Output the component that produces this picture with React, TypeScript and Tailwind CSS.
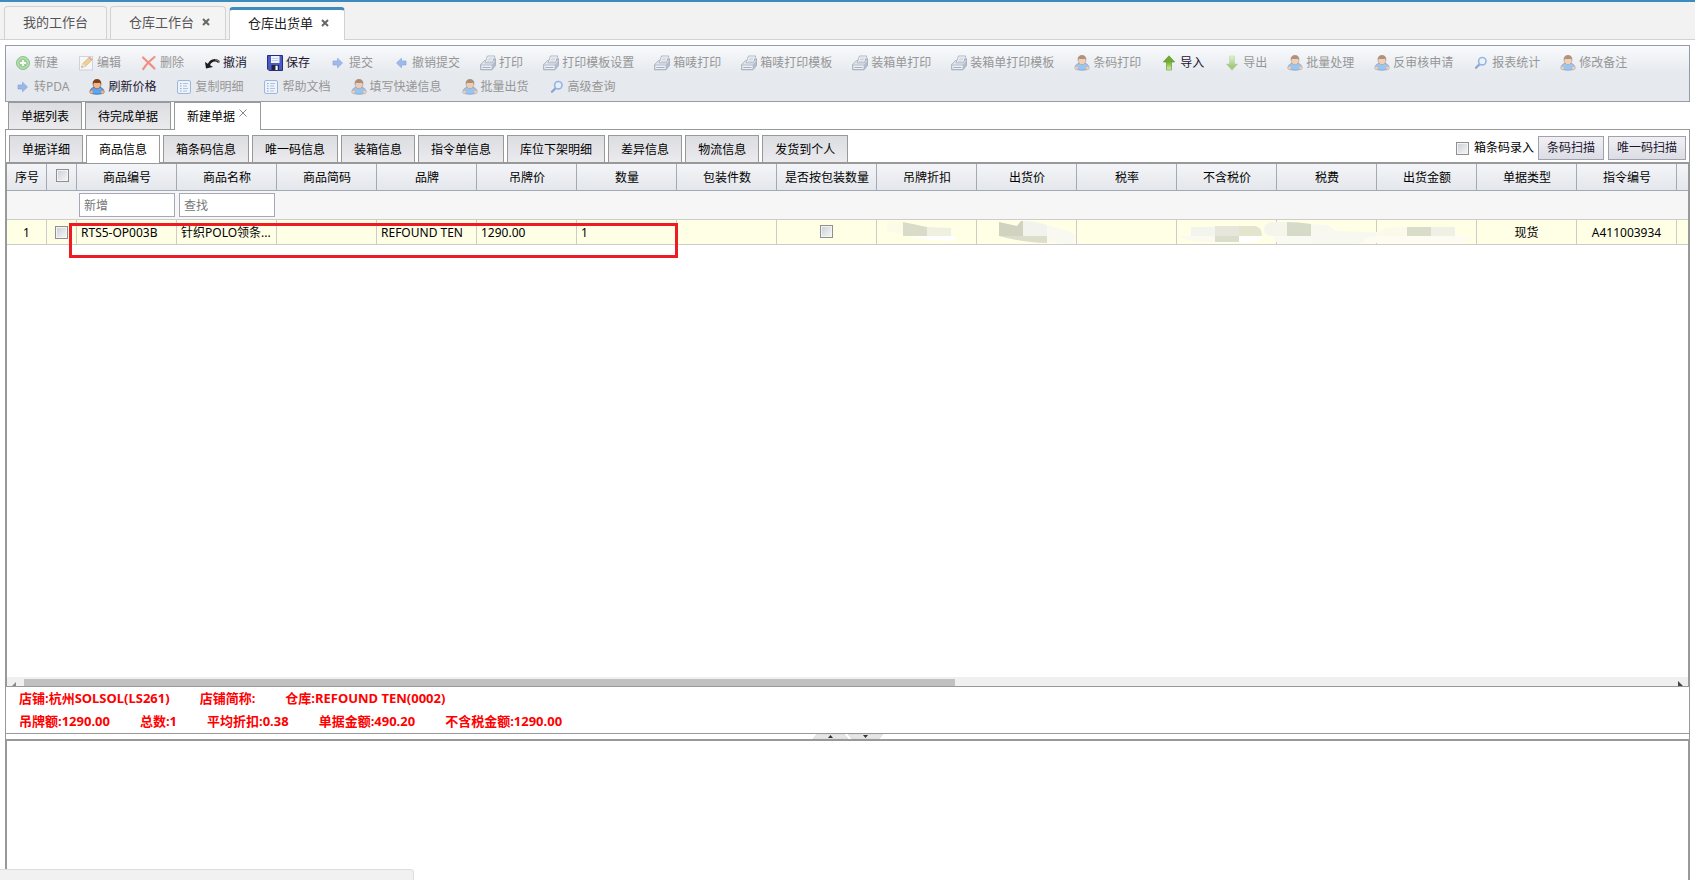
import { useState } from "react";

type IconName =
    | "add" | "edit" | "delete" | "undo" | "save" | "right" | "left"
    | "print" | "user" | "up" | "down" | "search" | "list";

interface Action {
    label: string;
    icon: IconName;
    enabled?: boolean;
}

const actions: Action[] = [
    { label: "新建", icon: "add" },
    { label: "编辑", icon: "edit" },
    { label: "删除", icon: "delete" },
    { label: "撤消", icon: "undo", enabled: true },
    { label: "保存", icon: "save", enabled: true },
    { label: "提交", icon: "right" },
    { label: "撤销提交", icon: "left" },
    { label: "打印", icon: "print" },
    { label: "打印模板设置", icon: "print" },
    { label: "箱唛打印", icon: "print" },
    { label: "箱唛打印模板", icon: "print" },
    { label: "装箱单打印", icon: "print" },
    { label: "装箱单打印模板", icon: "print" },
    { label: "条码打印", icon: "user" },
    { label: "导入", icon: "up", enabled: true },
    { label: "导出", icon: "down" },
    { label: "批量处理", icon: "user" },
    { label: "反审核申请", icon: "user" },
    { label: "报表统计", icon: "search" },
    { label: "修改备注", icon: "user" },
    { label: "转PDA", icon: "right" },
    { label: "刷新价格", icon: "user", enabled: true },
    { label: "复制明细", icon: "list" },
    { label: "帮助文档", icon: "list" },
    { label: "填写快递信息", icon: "user" },
    { label: "批量出货", icon: "user" },
    { label: "高级查询", icon: "search" },
];

const workTabs = ["我的工作台", "仓库工作台", "仓库出货单"];
const docTabs = ["单据列表", "待完成单据", "新建单据"];
const detailTabs = [
    "单据详细", "商品信息", "箱条码信息", "唯一码信息", "装箱信息",
    "指令单信息", "库位下架明细", "差异信息", "物流信息", "发货到个人",
];

const columns = [
    "商品编号", "商品名称", "商品简码", "品牌", "吊牌价", "数量", "包装件数", "是否按包装数量",
    "吊牌折扣", "出货价", "税率", "不含税价", "税费", "出货金额", "单据类型", "指令编号", "",
];

const row: { [key: string]: string } = {
    "商品编号": "RTS5-OP003B",
    "商品名称": "针织POLO领条...",
    "品牌": "REFOUND TEN",
    "吊牌价": "1290.00",
    "数量": "1",
    "单据类型": "现货",
    "指令编号": "A411003934",
};

const summary = [
    ["店铺:杭州SOLSOL(LS261)", "店铺简称:", "仓库:REFOUND TEN(0002)"],
    ["吊牌额:1290.00", "总数:1", "平均折扣:0.38", "单据金额:490.20", "不含税金额:1290.00"],
];

const checkboxClass =
    "block h-[13px] w-[13px] appearance-none border border-[#8e8f8f] bg-linear-to-br from-[#c9ced6] to-[#f8f8f8] shadow-[inset_0_0_0_1px_#f4f4f4] checked:bg-[#3c8dbc]";

function Icon({ name }: { name: IconName }) {
    switch (name) {
        case "add":
            return (
                <>
                    <circle cx="8" cy="8" r="6.5" fill="#58b848" stroke="#3f9a3a" />
                    <circle cx="8" cy="8" r="5.3" fill="none" stroke="#b5e3a8" strokeWidth="0.8" />
                    <path d="M8 5v6M5 8h6" stroke="#fff" strokeWidth="2" />
                </>
            );
        case "edit":
            return (
                <>
                    <rect x="1.5" y="1.5" width="13" height="13.5" fill="#fdfdfd" stroke="#b4bcc8" />
                    <path d="M3.5 12.5l1.2-4L11.5 1.8l3 2.7-6.8 6.8z" fill="#f0b34c" stroke="#c98b2f" strokeWidth="0.7" />
                    <path d="M11.5 1.8l3 2.7-1.3 1.3-3-2.7z" fill="#dc7060" />
                    <path d="M3.5 12.5l1.2-4 3 2.8z" fill="#f3dcb4" />
                    <path d="M3.5 12.5l.5-1.6 1.1 1z" fill="#444" />
                </>
            );
        case "delete":
            return (
                <path d="M2 2.5c3 3 7 6.500 11.500 11M13.500 2C9 5.500 5 9.500 2.200 14" fill="none" stroke="#f0452c" strokeWidth="2.2" strokeLinecap="round" />
            );
        case "undo":
            return (
                <>
                    <path d="M4.500 10.500C6 5.500 11 3.500 15 7" fill="none" stroke="#1c1c1c" strokeWidth="2.4" />
                    <path d="M11 4.800c2 0 3.500.8 4.500 2.800" fill="none" stroke="#777" strokeWidth="1.2" />
                    <path d="M1 7l1 6.500 7-1.500z" fill="#1c1c1c" />
                </>
            );
        case "save":
            return (
                <>
                    <path d="M.5 .5h15v15H2l-1.500-1.500z" fill="#4a5ac4" stroke="#262f7c" />
                    <rect x="4" y="1" width="8.500" height="7" fill="#eef2fb" />
                    <path d="M5 3.500h6.500M5 5.500h6.500" stroke="#b9c4e2" strokeWidth="0.8" />
                    <rect x="4.500" y="10" width="7.500" height="5" fill="#20253f" />
                    <rect x="8.500" y="10.700" width="2.200" height="4.300" fill="#fff" />
                </>
            );
        case "right":
            return <path d="M3 6h4.500V3.200L12.500 8l-5 4.800V10H3z" fill="#5c8fe6" stroke="#3d6fc8" strokeWidth="0.7" />;
        case "left":
            return <path d="M13 6H8.500V3.200L3.500 8l5 4.800V10H13z" fill="#5c8fe6" stroke="#3d6fc8" strokeWidth="0.7" />;
        case "print":
            return (
                <>
                    <path d="M.6 9.500L4.500 5.500h8.300L15.500 3.500v7L12 14.800H.6z" fill="#8796ad" stroke="#56657c" strokeWidth="0.7" />
                    <path d="M1 9.500h11l3.300-4-2.300.3H4.700z" fill="#d5deea" />
                    <path d="M5.200 7.800L7.500 1h7.300l-2.500 6.800z" fill="#fff" stroke="#5f6f88" strokeWidth="0.8" />
                    <path d="M8.200 3h4.600M7.600 4.700h4.600M7 6.300h4.600" stroke="#7f93ae" strokeWidth="0.7" />
                    <path d="M1.300 10.500h10.300v3.500H1.300z" fill="#eff3f9" />
                    <path d="M2.300 12.500h8.200" stroke="#6f8099" />
                </>
            );
        case "user":
            return (
                <>
                    <path d="M1 13.300c0-3.200 2-4.800 4.800-5h4.400c2.800.2 4.800 1.800 4.800 5-1.500 2.500-12.500 2.500-14 0z" fill="#58a6f5" stroke="#2868bf" strokeWidth="0.8" />
                    <circle cx="2.500" cy="13" r="1.700" fill="#f3b98c" stroke="#bd7c4c" strokeWidth="0.5" />
                    <circle cx="13.500" cy="13" r="1.700" fill="#f3b98c" stroke="#bd7c4c" strokeWidth="0.5" />
                    <path d="M4 4.500C4 1.800 5.600.5 8 .5s4 1.300 4 4c0 3.200-1.700 5.300-4 5.300S4 7.700 4 4.500z" fill="#f0b78a" stroke="#8a4f24" strokeWidth="0.6" />
                    <path d="M4 5.200C3.600 2 5.400.3 8 .3s4.400 1.700 4 4.900c-.5-.4-.7-1-1-1.500-1.800.5-4.200.5-6 0-.3.500-.5 1.100-1 1.500z" fill="#7b421b" />
                </>
            );
        case "up":
            return <path d="M8 .8l5.700 6.200h-3.200v8h-5V7H2.300z" fill="url(#greenUp)" stroke="#55922a" strokeWidth="0.6" />;
        case "down":
            return <path d="M8 15.200L2.300 9h3.200V1h5v8h3.200z" fill="url(#greenDown)" stroke="#86b85c" strokeWidth="0.5" />;
        case "search":
            return (
                <>
                    <path d="M6.800 9L3 12.800" stroke="#3d6fb8" strokeWidth="2.2" strokeLinecap="round" />
                    <circle cx="9.300" cy="6.200" r="3.700" fill="#eaf4ff" stroke="#4d8ade" strokeWidth="1.6" />
                </>
            );
        case "list":
            return (
                <>
                    <rect x="1.5" y="1.5" width="13" height="13" rx="1.5" fill="#f7fbff" stroke="#5b8fd4" />
                    <path d="M4 4.500h1.500M4 7h1.500M4 9.500h1.500M4 12h1.500" stroke="#3474cc" strokeWidth="1.2" />
                    <path d="M7 4.500h5M7 7h4M7 9.500h5M7 12h4" stroke="#7fa7dc" />
                </>
            );
    }
}

function ToolButton({ label, icon, enabled }: Action) {
    return (
        <button type="button" disabled={!enabled} className={`flex h-6 items-center gap-[3px] ${enabled ? "text-[#1c1530]" : "text-[#969696]"}`}>
            <svg viewBox="0 0 16 16" className={`h-4 w-4 shrink-0 ${enabled ? "" : "opacity-55"}`}>
                <Icon name={icon} />
            </svg>
            {label}
        </button>
    );
}

function GrayTab({ label, active, closable, onClick }: { label: string; active: boolean; closable?: boolean; onClick: () => void }) {
    return (
        <button
            type="button"
            onClick={onClick}
            className={`flex shrink-0 items-center border border-b-0 border-[#999] pl-3 ${closable ? "pr-[13px]" : "pr-3"} ${active ? "relative z-10 -mb-px h-[28px] bg-white" : "h-[27px] bg-linear-to-b from-[#dcdde1] to-[#ebebee] pt-px"}`}
        >
            {label}
            {closable && (
                <svg viewBox="0 0 8 8" className="mb-2 ml-1 h-2 w-2">
                    <path d="M.5 .5l7 7M7.500 .5l-7 7" stroke="#888" />
                </svg>
            )}
        </button>
    );
}

export default function App() {
    const [workTab, setWorkTab] = useState("仓库出货单");
    const [docTab, setDocTab] = useState("新建单据");
    const [detailTab, setDetailTab] = useState("商品信息");

    return (
        <div className="relative flex h-screen flex-col overflow-hidden bg-white font-['Noto_Sans','Noto_Sans_CJK_SC',sans-serif] text-xs text-black">
            <svg className="absolute h-0 w-0">
                <defs>
                    <linearGradient id="greenUp" x1="0" y1="0" x2="0" y2="1">
                        <stop offset="0.4" stopColor="#6dac2c" />
                        <stop offset="1" stopColor="#d6f2a8" />
                    </linearGradient>
                    <linearGradient id="greenDown" x1="0" y1="0" x2="0" y2="1">
                        <stop offset="0" stopColor="#d6f2a8" />
                        <stop offset="0.7" stopColor="#6dac2c" />
                    </linearGradient>
                </defs>
            </svg>

            {/* Workspace tabs */}
            <nav className="flex h-10 shrink-0 items-end gap-[3px] border-t-2 border-b border-t-[#3c8dbc] border-b-[#d2d2d2] bg-[#f2f2f2] pl-1 text-[13px]">
                {workTabs.map((tab, i) => {
                    const active = tab === workTab;
                    return (
                        <button
                            key={tab}
                            type="button"
                            onClick={() => setWorkTab(tab)}
                            className={`flex items-center gap-2 rounded-t border border-b-0 border-[#d2d2d2] ${i ? "pr-[15px]" : "pr-[18px]"} pl-[18px] ${active ? "-mb-px h-[33px] border-t-[3px] border-t-[#3c8dbc] bg-white pb-[3px] text-[#222]" : "h-[33px] bg-[#f4f4f4] text-[#555]"}`}
                        >
                            {tab}
                            {i > 0 && (
                                <svg viewBox="0 0 8 8" className="mb-[2px] h-2 w-2">
                                    <path d="M1 1l6 6M7 1L1 7" stroke="#666" strokeWidth="2" />
                                </svg>
                            )}
                        </button>
                    );
                })}
            </nav>

            <div className="flex min-h-0 flex-1 flex-col pt-[5px] pr-[5px] pl-[5px]">
                {/* Toolbar */}
                <div className="flex shrink-0 flex-wrap gap-x-5 border border-[#959ca8] bg-linear-to-b from-[#f8fafc] to-[#e6e9ee] to-50% pt-[5px] pr-2 pb-[2px] pl-[9px]">
                    {actions.map((action) => (
                        <ToolButton key={action.label} {...action} />
                    ))}
                </div>

                {/* Document tabs */}
                <div className="flex shrink-0 items-end gap-[3px] border-b border-[#999] pl-[3px]">
                    {docTabs.map((tab) => (
                        <GrayTab key={tab} label={tab} active={tab === docTab} closable={tab === "新建单据"} onClick={() => setDocTab(tab)} />
                    ))}
                </div>

                {/* Detail tabs */}
                <div className="flex h-[34px] shrink-0 items-end border-x border-b-2 border-[#999] pl-[3px]">
                    <div className="flex flex-1 items-end gap-[3px]">
                        {detailTabs.map((tab) => (
                            <GrayTab key={tab} label={tab} active={tab === detailTab} onClick={() => setDetailTab(tab)} />
                        ))}
                    </div>
                    <div className="flex items-center gap-1 pr-[3px] pb-[2px]">
                        <label className="flex items-center gap-[5px]">
                            <input type="checkbox" className={checkboxClass} />
                            箱条码录入
                        </label>
                        <button type="button" className="h-6 border border-[#a0a0b0] bg-linear-to-b from-[#f0f0f4] to-[#dcdce4] px-2 text-[#1c1530]">条码扫描</button>
                        <button type="button" className="h-6 border border-[#a0a0b0] bg-linear-to-b from-[#f0f0f4] to-[#dcdce4] px-2 text-[#1c1530]">唯一码扫描</button>
                    </div>
                </div>

                {/* Product grid */}
                <div className="relative min-h-0 flex-1 overflow-hidden border-x-2 border-[#999]">
                    <table className="w-[1770px] table-fixed border-separate border-spacing-0">
                        <colgroup>
                            <col className="w-[40px]" />
                            <col className="w-[30px]" />
                            {columns.map((col) => (
                                <col key={col} className="w-[100px]" />
                            ))}
                        </colgroup>
                        <thead>
                            <tr className="h-[27px] bg-linear-to-b from-[#f4f5f8] to-[#e3e6eb]">
                                <th className="border-r border-b border-[#a3a9b5] p-0 pt-px pl-px font-normal">序号</th>
                                <th className="border-r border-b border-[#a3a9b5] p-0 pl-[9px] align-top">
                                    <input type="checkbox" aria-label="全选" className={`mt-[5px] ${checkboxClass}`} />
                                </th>
                                {columns.map((col) => (
                                    <th key={col} className="border-r border-b border-[#a3a9b5] p-0 pt-px pl-px font-normal whitespace-nowrap">{col}</th>
                                ))}
                            </tr>
                        </thead>
                        <tbody>
                            <tr className="h-[29px] bg-[#f6f6f6]">
                                <td colSpan={2} className="border-b border-[#ccc] p-0" />
                                <td className="border-b border-[#ccc] p-0 pl-[2px]">
                                    <input placeholder="新增" aria-label="商品编号" className="block h-6 w-24 border border-[#a3a9b5] bg-white px-1 placeholder:text-[#777]" />
                                </td>
                                <td className="border-b border-[#ccc] p-0 pl-[2px]">
                                    <input placeholder="查找" aria-label="商品名称" className="block h-6 w-24 border border-[#a3a9b5] bg-white px-1 placeholder:text-[#777]" />
                                </td>
                                <td colSpan={15} className="border-b border-[#ccc] p-0" />
                            </tr>
                            <tr className="h-[25px] bg-[#ffffe6]">
                                <td className="border-r border-b border-[#ccc] p-0 pt-px text-center">1</td>
                                <td className="border-r border-b border-[#ccc] p-0 pl-2">
                                    <input type="checkbox" aria-label="选择第1行" className={checkboxClass} />
                                </td>
                                {columns.map((col) => (
                                    <td key={col} className={`overflow-hidden border-r border-b border-[#ccc] px-1 whitespace-nowrap ${col === "是否按包装数量" ? "pb-px" : "pt-px"} ${col === "单据类型" || col === "指令编号" ? "text-center" : ""}`}>
                                        {col === "是否按包装数量" ? <input type="checkbox" aria-label={col} className={`mx-auto ${checkboxClass}`} /> : row[col]}
                                    </td>
                                ))}
                            </tr>
                        </tbody>
                    </table>

                    {/* Blurred amounts */}
                    <svg viewBox="0 0 600 26" className="absolute top-[56px] left-[873px] h-[26px] w-[600px]">
                        <path d="M7 3Q8 1 23 1v13Q8 13 7 9z" fill="#fcfbe8" />
                        <path d="M23 2l24 5v9H23z" fill="#d9dcc8" />
                        <path d="M47 7l24 1v8H47z" fill="#f0f0e1" />
                        <path d="M30 16h46q0 5-6 5-22 0-40-5z" fill="#fff" />
                        <path d="M119 2l18 4 4-5h2v15h-24z" fill="#cfd3c0" />
                        <path d="M143 1q12 0 24 4v11h-24z" fill="#f3f3ee" />
                        <path d="M167 5q24 6 28 10v9h-10l-18-2z" fill="#f9f9f1" />
                        <path d="M119 16h48v7q-28-1-48-7z" fill="#dcdecb" />
                        <path d="M300 16h35v6q-32 0-35-6z" fill="#fafaf0" />
                        <path d="M311 7h24v9h-24z" fill="#f4f4ef" />
                        <path d="M335 6h24v10h-24z" fill="#e8e5da" />
                        <path d="M359 6h17q6 2 6 10h-23z" fill="#e4e5cf" />
                        <path d="M335 16h24v6h-24z" fill="#dcdecd" />
                        <path d="M359 16h23q-1 6-8 6h-15z" fill="#fff" />
                        <path d="M407 2h-16q-7 1-7 8 0 6 9 6h14z" fill="#f5f5ec" />
                        <path d="M407 2q12 0 24 2v12h-24z" fill="#d6dac8" />
                        <path d="M393 16h38v8h-30q-8-2-8-8z" fill="#fafaf3" />
                        <path d="M431 4l14 1q7 1 10 6l42 1v7l-19 5h-47z" fill="#f8f8f0" />
                        <path d="M503 9q10-2 24-2v9h-32z" fill="#fbf9ea" />
                        <path d="M527 7h24v9h-24z" fill="#d9dcc8" />
                        <path d="M551 7h24v9h-24z" fill="#f0f0e4" />
                        <path d="M484 18l12-2h94q0 6-8 7h-98z" fill="#fcfcf3" />
                    </svg>

                    {/* Highlight frame around the product fields */}
                    <div className="pointer-events-none absolute top-[59px] left-[62px] h-[35px] w-[609px] border-[3px] border-[#ed1c24]" />

                    {/* Horizontal scrollbar */}
                    <div className="absolute inset-x-0 bottom-0 flex h-[9px] items-end bg-[#f0f0f0]">
                        <svg viewBox="0 0 17 7" className="h-[7px] w-[17px] shrink-0">
                            <path d="M9 3v4H5z" fill="#888" />
                        </svg>
                        <div className="h-[7px] w-[55.4%] bg-[#c1c1c1]" />
                        <svg viewBox="0 0 17 7" className="ml-auto h-[7px] w-[17px] shrink-0">
                            <path d="M7 2v5h5z" fill="#444" />
                        </svg>
                    </div>
                </div>

                {/* Summary */}
                <div className="flex h-[48px] shrink-0 flex-col justify-center gap-[3px] border border-[#999] px-[13px] pb-px text-[13px] leading-5 font-bold text-[#f00]">
                    {summary.map((items) => (
                        <div key={items[0]} className="flex gap-[30px]">
                            {items.map((item) => (
                                <span key={item}>{item}</span>
                            ))}
                        </div>
                    ))}
                </div>

                {/* Splitter */}
                <div className="flex h-[5px] shrink-0 justify-center border-x border-[#999]">
                    <button type="button" aria-label="折叠上方" className="block h-[5px]">
                        <svg viewBox="0 0 35 5" className="h-[5px] w-[35px]">
                            <path d="M4 0h27l4 5H0z" fill="#e6e6e6" stroke="#ccc" strokeWidth="0.5" />
                            <path d="M17.500 1l2.500 3h-5z" fill="#333" />
                        </svg>
                    </button>
                    <button type="button" aria-label="折叠下方" className="block h-[5px]">
                        <svg viewBox="0 0 35 5" className="h-[5px] w-[35px]">
                            <path d="M0 0h35l-4 5H4z" fill="#e6e6e6" stroke="#ccc" strokeWidth="0.5" />
                            <path d="M17.500 4l2.500-3h-5z" fill="#333" />
                        </svg>
                    </button>
                </div>

                <div className="h-[141px] shrink-0 border-2 border-b-0 border-[#999]" />
            </div>

            {/* Browser status bubble */}
            <div className="absolute bottom-0 left-0 h-[11px] w-[414px] rounded-tr border-t border-r border-[#ddd] bg-[#f1f1f1]" />
        </div>
    );
}
